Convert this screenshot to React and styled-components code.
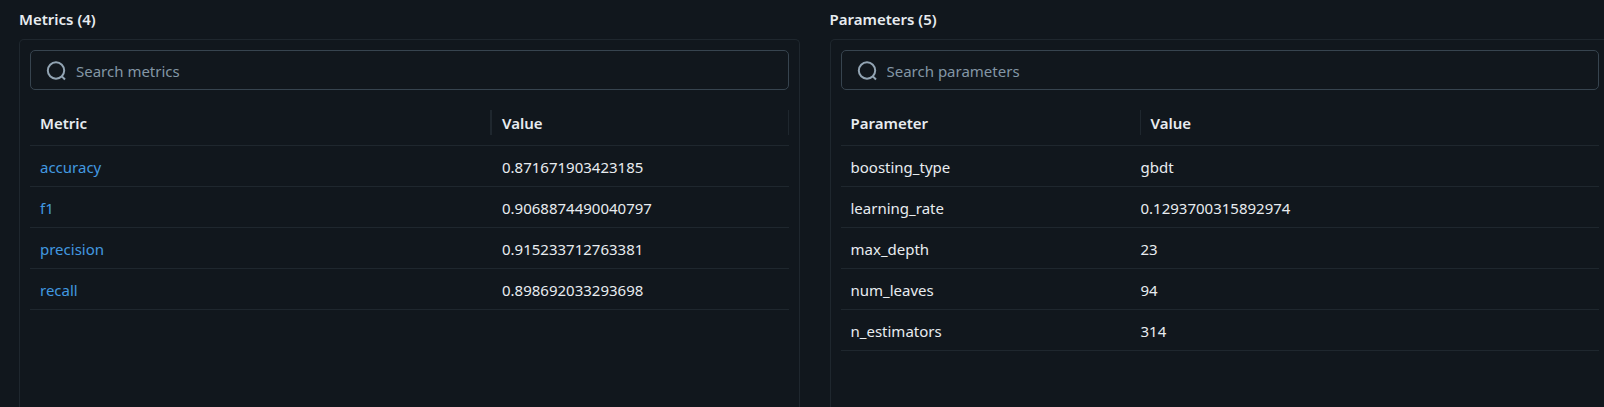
import React, { useState } from "react";
import styled, { createGlobalStyle } from "styled-components";

const GlobalStyle = createGlobalStyle`
  * { box-sizing: border-box; }
  body {
    margin: 0;
    overflow: hidden;
    background: #11171d;
    color: #e8ecf0;
    font-family: "Noto Sans", "Open Sans", sans-serif;
    font-size: 15px;
    line-height: 20px;
  }
`;

const Page = styled.main`
  display: grid;
  grid-template-columns: 1fr 1fr;
  gap: 30px;
  height: 100vh;
  margin: 0 -6px 0 19px;
`;

const Section = styled.section`
  display: flex;
  flex-direction: column;
  min-width: 0;
`;

const Title = styled.h2`
  margin: 0;
  padding: 9px 0 10px;
  font-size: 15px;
  line-height: 20px;
  font-weight: 600;
`;

const Panel = styled.div`
  flex: 1;
  padding: 10px;
  border: 1px solid #1f272e;
  border-bottom: 0;
  border-radius: 5px 5px 0 0;
`;

const SearchBox = styled.label`
  display: flex;
  align-items: center;
  gap: 10px;
  height: 40px;
  margin-bottom: 10px;
  padding: 1px 15px 0;
  border: 1px solid #37444f;
  border-radius: 5px;

  &:focus-within { border-color: #4299e0; }
`;

const SearchInput = styled.input`
  flex: 1;
  min-width: 0;
  padding: 0;
  border: 0;
  outline: 0;
  background: transparent;
  color: inherit;
  font: inherit;

  &::placeholder { color: #8396a5; opacity: 1; }
`;

const Table = styled.table`
  width: 100%;
  table-layout: fixed;
  border-collapse: separate;
  border-spacing: 0;
`;

const HeadCell = styled.th`
  width: ${(p) => p.$width || "auto"};
  height: 46px;
  padding: 10px 0 10px ${(p) => (p.$inset ? "9px" : "0")};
  border-bottom: 1px solid #1f272e;
  text-align: left;
  font-weight: 600;
`;

const HeadLabel = styled.div`
  height: 25px;
  line-height: 27px;
  padding-left: 10px;
  border-left: ${(p) => (p.$ruleLeft ? "1px solid #1f272e" : "0")};
  border-right: ${(p) => (p.$ruleRight ? `${p.$ruleRight}px solid #1f272e` : "0")};
`;

const Cell = styled.td`
  height: 41px;
  padding: 11px 10px 9px;
  border-bottom: 1px solid #1f272e;
`;

const MetricLink = styled.a`
  color: #4299e0;
  text-decoration: none;

  &:hover { text-decoration: underline; }
`;

const SearchIcon = () => (
  <svg width="20" height="20" viewBox="0 0 20 20" fill="none" stroke="#92a4b3" strokeWidth="2" aria-hidden="true">
    <circle cx="10" cy="9.5" r="8.2" />
    <path d="M15.6 15.1 L19 18.5" />
  </svg>
);

const metrics = [
  ["accuracy", "0.871671903423185"],
  ["f1", "0.9068874490040797"],
  ["precision", "0.915233712763381"],
  ["recall", "0.898692033293698"],
];

const parameters = [
  ["boosting_type", "gbdt"],
  ["learning_rate", "0.1293700315892974"],
  ["max_depth", "23"],
  ["num_leaves", "94"],
  ["n_estimators", "314"],
];

function DataSection({ title, placeholder, rows, header, renderName }) {
  const [query, setQuery] = useState("");
  const shown = rows.filter(([name]) => name.includes(query.toLowerCase()));
  return (
    <Section>
      <Title>{title} ({rows.length})</Title>
      <Panel>
        <SearchBox>
          <SearchIcon />
          <SearchInput
            placeholder={placeholder}
            aria-label={placeholder}
            value={query}
            onChange={(e) => setQuery(e.target.value)}
          />
        </SearchBox>
        <Table>
          <thead>
            <tr>{header}</tr>
          </thead>
          <tbody>
            {shown.map(([name, value]) => (
              <tr key={name}>
                <Cell>{renderName ? renderName(name) : name}</Cell>
                <Cell>{value}</Cell>
              </tr>
            ))}
          </tbody>
        </Table>
      </Panel>
    </Section>
  );
}

export default function App() {
  return (
    <>
      <GlobalStyle />
      <Page>
        <DataSection
          title="Metrics"
          placeholder="Search metrics"
          rows={metrics}
          renderName={(name) => <MetricLink href={`#${name}`}>{name}</MetricLink>}
          header={
            <>
              <HeadCell $width="462px"><HeadLabel $ruleRight={2}>Metric</HeadLabel></HeadCell>
              <HeadCell><HeadLabel $ruleRight={1}>Value</HeadLabel></HeadCell>
            </>
          }
        />
        <DataSection
          title="Parameters"
          placeholder="Search parameters"
          rows={parameters}
          header={
            <>
              <HeadCell $width="290px"><HeadLabel>Parameter</HeadLabel></HeadCell>
              <HeadCell $inset><HeadLabel $ruleLeft>Value</HeadLabel></HeadCell>
            </>
          }
        />
      </Page>
    </>
  );
}
